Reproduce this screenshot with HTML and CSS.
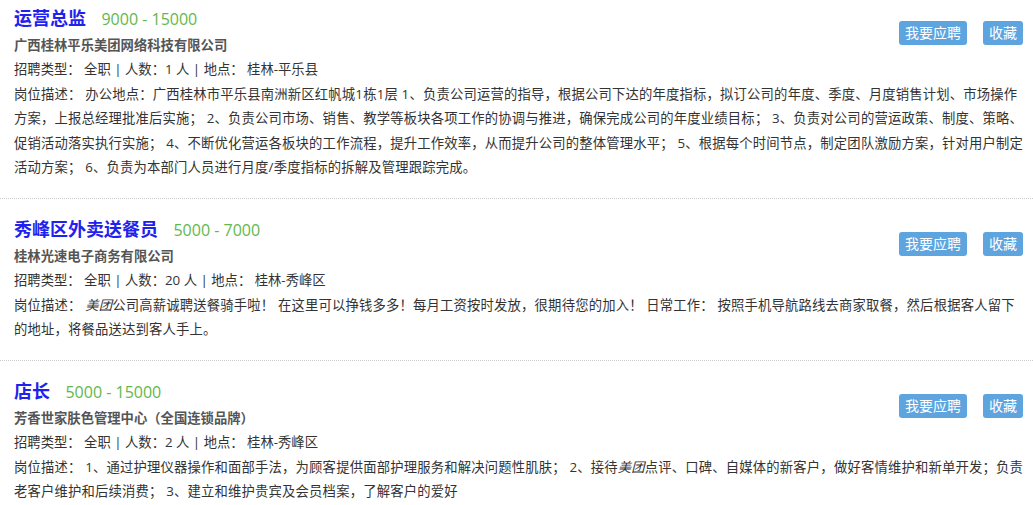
FILE: index.html
```html
<!DOCTYPE html>
<html lang="zh-CN">
<head>
  <meta charset="UTF-8">
  <title>招聘信息</title>
  <meta name="viewport" content="width=device-width, initial-scale=1.0">
  <link rel="stylesheet" href="styles.css">
</head>
<body>
  <div class="job-list">
    <div class="job">
      <div class="job-actions">
        <button class="btn">我要应聘</button>
        <button class="btn">收藏</button>
      </div>
      <div class="job-head">
        <span class="job-title">运营总监</span>
        <span class="job-salary">9000 - 15000</span>
      </div>
      <p class="job-company">广西桂林平乐美团网络科技有限公司</p>
      <p class="job-meta">招聘类型： 全职 | 人数：1 人 | 地点： 桂林-平乐县</p>
      <p class="job-desc">岗位描述： 办公地点：广西桂林市平乐县南洲新区红帆城1栋1层 1、负责公司运营的指导，根据公司下达的年度指标，拟订公司的年度、季度、月度销售计划、市场操作方案，上报总经理批准后实施； 2、负责公司市场、销售、教学等板块各项工作的协调与推进，确保完成公司的年度业绩目标； 3、负责对公司的营运政策、制度、策略、促销活动落实执行实施； 4、不断优化营运各板块的工作流程，提升工作效率，从而提升公司的整体管理水平； 5、根据每个时间节点，制定团队激励方案，针对用户制定活动方案； 6、负责为本部门人员进行月度/季度指标的拆解及管理跟踪完成。</p>
    </div>

    <div class="job">
      <div class="job-actions">
        <button class="btn">我要应聘</button>
        <button class="btn">收藏</button>
      </div>
      <div class="job-head">
        <span class="job-title">秀峰区外卖送餐员</span>
        <span class="job-salary">5000 - 7000</span>
      </div>
      <p class="job-company">桂林光速电子商务有限公司</p>
      <p class="job-meta">招聘类型： 全职 | 人数：20 人 | 地点： 桂林-秀峰区</p>
      <p class="job-desc">岗位描述： <em>美团</em>公司高薪诚聘送餐骑手啦！ 在这里可以挣钱多多！每月工资按时发放，很期待您的加入！ 日常工作： 按照手机导航路线去商家取餐，然后根据客人留下的地址，将餐品送达到客人手上。</p>
    </div>

    <div class="job">
      <div class="job-actions">
        <button class="btn">我要应聘</button>
        <button class="btn">收藏</button>
      </div>
      <div class="job-head">
        <span class="job-title">店长</span>
        <span class="job-salary">5000 - 15000</span>
      </div>
      <p class="job-company">芳香世家肤色管理中心（全国连锁品牌）</p>
      <p class="job-meta">招聘类型： 全职 | 人数：2 人 | 地点： 桂林-秀峰区</p>
      <p class="job-desc">岗位描述： 1、通过护理仪器操作和面部手法，为顾客提供面部护理服务和解决问题性肌肤； 2、接待<em>美团</em>点评、口碑、自媒体的新客户，做好客情维护和新单开发；负责老客户维护和后续消费； 3、建立和维护贵宾及会员档案，了解客户的爱好</p>
    </div>
  </div>
</body>
</html>
```

FILE: styles.css
```css
body {
  margin: 0;
  background-color: #fff;
  color: #333;
  font-family: "Open Sans", "Noto Sans CJK SC", sans-serif;
  font-size: 13.33px;
  text-spacing-trim: space-all;
}

.job {
  padding: 16px 10px 18px 14px;
  border-bottom: 1px dotted #ccc;
}

.job:first-child {
  padding-top: 3.5px;
}

.job-actions {
  float: right;
  margin-top: 17px;
  display: flex;
  gap: 16px;
}

.btn {
  height: 24px;
  padding: 0 6px;
  border: none;
  border-radius: 3px;
  background-color: #5ea5e0;
  color: #fff;
  font-family: inherit;
  font-size: 14px;
  line-height: 24px;
}

.job-head {
  height: 29px;
  line-height: 29px;
}

.job-title {
  color: #1f22ee;
  font-size: 18px;
  font-weight: bold;
  margin-right: 12px;
}

.job-salary {
  color: #62b84c;
  font-size: 16px;
}

.job p {
  margin: 0;
  line-height: 24.5px;
}

.job-company {
  color: #555;
  font-weight: bold;
}

.job-desc {
  letter-spacing: 0.18px;
}

.job-desc em {
  font-style: italic;
}
```
